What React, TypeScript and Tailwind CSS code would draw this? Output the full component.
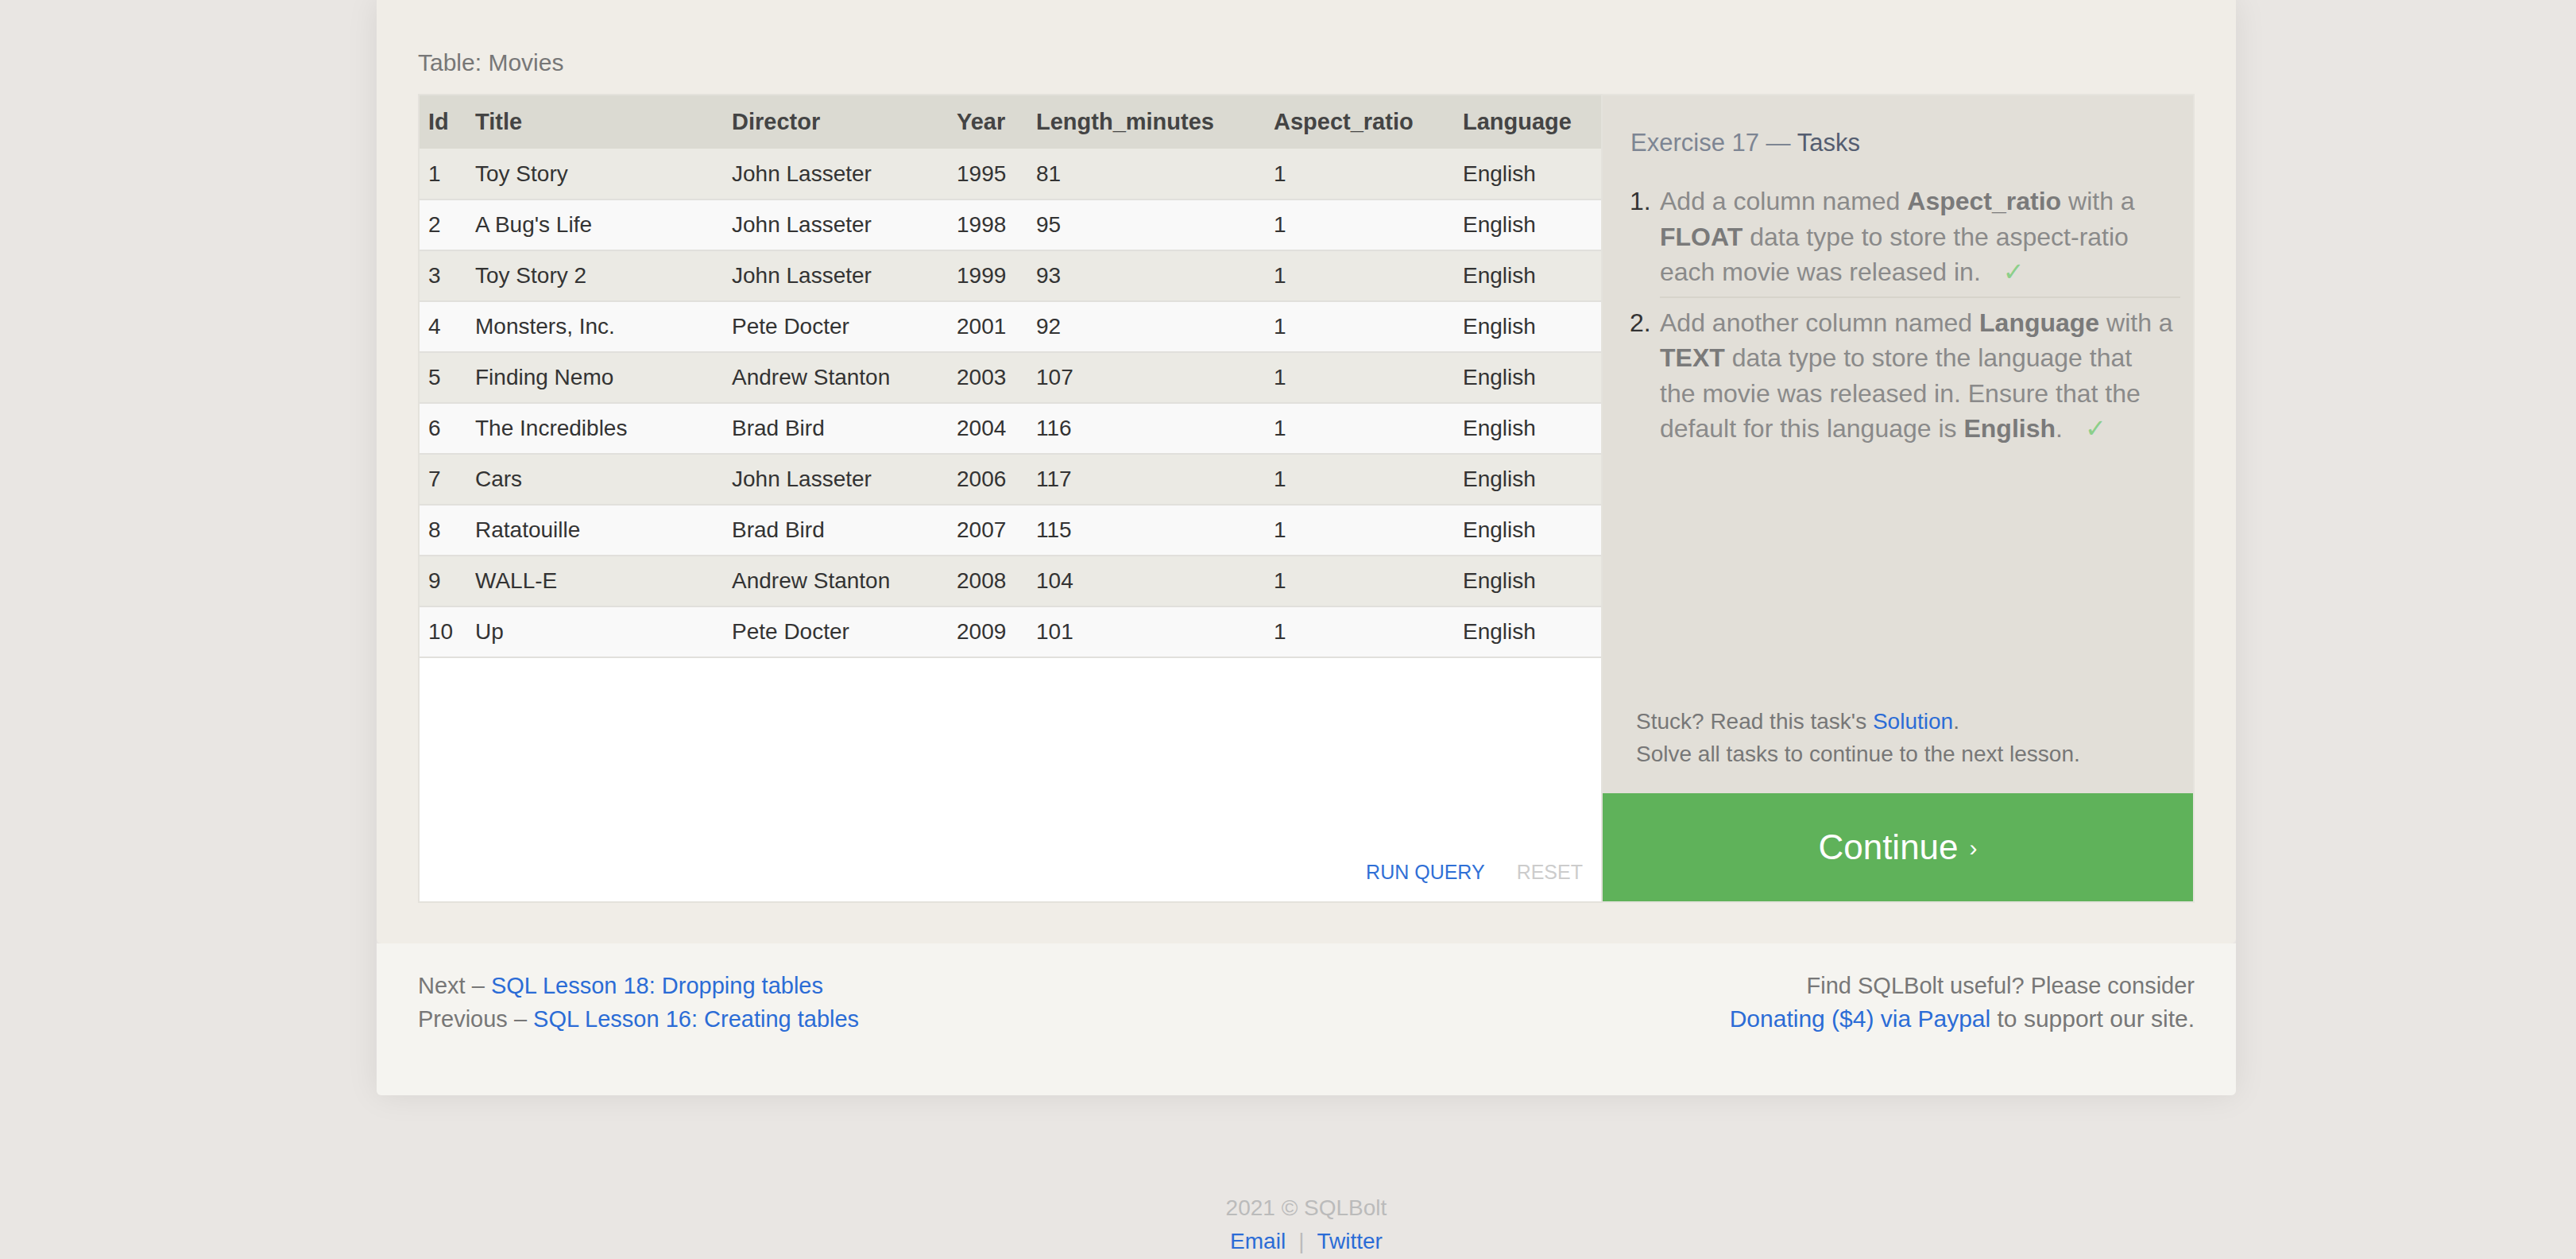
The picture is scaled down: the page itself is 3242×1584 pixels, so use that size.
import React from 'react';

const movies = [
  [1, 'Toy Story', 'John Lasseter', 1995, 81],
  [2, "A Bug's Life", 'John Lasseter', 1998, 95],
  [3, 'Toy Story 2', 'John Lasseter', 1999, 93],
  [4, 'Monsters, Inc.', 'Pete Docter', 2001, 92],
  [5, 'Finding Nemo', 'Andrew Stanton', 2003, 107],
  [6, 'The Incredibles', 'Brad Bird', 2004, 116],
  [7, 'Cars', 'John Lasseter', 2006, 117],
  [8, 'Ratatouille', 'Brad Bird', 2007, 115],
  [9, 'WALL-E', 'Andrew Stanton', 2008, 104],
  [10, 'Up', 'Pete Docter', 2009, 101],
];

const columns = ['Id', 'Title', 'Director', 'Year', 'Length_minutes', 'Aspect_ratio', 'Language'];
const widths = ['w-[59px]', 'w-[323px]', 'w-[283px]', 'w-[100px]', 'w-[299px]', 'w-[238px]', 'w-[185px]'];

const Check = () => (
  <span className="ml-[28px] text-[#8ccf8a] font-['DejaVu_Sans',sans-serif] text-[32px]">✓</span>
);

const MoviesTable = () => (
  <table className="w-[1487px] table-fixed border-collapse">
    <colgroup>
      {widths.map((w, i) => (
        <col key={i} className={w} />
      ))}
    </colgroup>
    <thead>
      <tr className="bg-[#dbdad2]">
        {columns.map((c) => (
          <th key={c} className="h-[67px] pl-[11px] text-left text-[29px] font-bold text-[#444]">
            {c}
          </th>
        ))}
      </tr>
    </thead>
    <tbody>
      {movies.map((m, i) => (
        <tr key={i} className={i % 2 === 0 ? 'bg-[#ebeae4]' : 'bg-[#f9f9f9]'}>
          {[...m, 1, 'English'].map((v, j) => (
            <td
              key={j}
              className="h-[64px] pl-[11px] border-b-2 border-[#e1e0dc] text-[28px] text-[#333] whitespace-nowrap"
            >
              {v}
            </td>
          ))}
        </tr>
      ))}
    </tbody>
  </table>
);

const TaskPanel = () => (
  <div className="flex-1 flex flex-col bg-[#e2dfd8] border-2 border-l-0 border-[#e6e4de]">
    <div className="pl-[35px] pt-[40px] text-[31px] leading-[40px] text-[#7d8593]">
      Exercise 17 — <span className="text-[#545d70]">Tasks</span>
    </div>

    <ol className="mt-[31px] pl-[34px] pr-[16px] text-[32px] leading-[44.5px] text-[#8a8a8a]">
      <li className="flex">
        <span className="w-[38px] shrink-0 text-[#333]">1.</span>
        <div className="flex-1 whitespace-nowrap pb-[8px] border-b-2 border-[#d7d4cb]">
          Add a column named <b className="text-[#7a7a7a]">Aspect_ratio</b> with a
          <br />
          <b className="text-[#7a7a7a]">FLOAT</b> data type to store the aspect-ratio
          <br />
          each movie was released in.
          <Check />
        </div>
      </li>
      <li className="flex pt-[9px]">
        <span className="w-[38px] shrink-0 text-[#333]">2.</span>
        <div className="whitespace-nowrap">
          Add another column named <b className="text-[#7a7a7a]">Language</b> with a
          <br />
          <b className="text-[#7a7a7a]">TEXT</b> data type to store the language that
          <br />
          the movie was released in. Ensure that the
          <br />
          default for this language is <b className="text-[#7a7a7a]">English</b>.
          <Check />
        </div>
      </li>
    </ol>

    <div className="mt-auto pl-[42px] pb-[29px] text-[28px] leading-[41px] text-[#777]">
      <div>
        Stuck? Read this task's <a className="text-[#2b6cd6]">Solution</a>.
      </div>
      <div>Solve all tasks to continue to the next lesson.</div>
    </div>

    <button className="h-[136px] w-full bg-[#5fb25a] text-white flex items-center justify-center">
      <span className="text-[44px]">Continue</span>
      <span className="ml-[14px] text-[30px]">›</span>
    </button>
  </div>
);

export default function App() {
  return (
    <div className="min-h-screen bg-[#e9e6e3] font-['Liberation_Sans',Arial,sans-serif] pb-[2px]">
      <div className="ml-[474px] w-[2340px] rounded-b-[6px] overflow-hidden shadow-[0_0_40px_rgba(0,0,0,0.08)]">
        <div className="bg-[#f0ede7] px-[52px] pt-[58px] pb-[51px] rounded-b-[6px]">
          <div className="text-[30px] leading-[42px] text-[#777] mb-[18px]">Table: Movies</div>
          <div className="flex h-[1018px]">
            <div className="w-[1491px] shrink-0 flex flex-col bg-white border-2 border-[#e4e2dc]">
              <MoviesTable />
              <div className="mt-auto flex justify-end items-center gap-[40px] pr-[23px] pb-[22px] text-[25px] leading-[30px]">
                <span className="text-[#2f6fd6]">RUN QUERY</span>
                <span className="text-[#cccccc]">RESET</span>
              </div>
            </div>
            <TaskPanel />
          </div>
        </div>

        <div className="bg-[#f5f4f0] px-[52px] pt-[32px] pb-[75px] flex justify-between text-[29px] leading-[42px] text-[#777]">
          <div>
            <div>
              Next – <a className="text-[#2b6cd6]">SQL Lesson 18: Dropping tables</a>
            </div>
            <div>
              Previous – <a className="text-[#2b6cd6]">SQL Lesson 16: Creating tables</a>
            </div>
          </div>
          <div className="text-right">
            <div>Find SQLBolt useful? Please consider</div>
            <div className="text-[30px]">
              <a className="text-[#2b6cd6]">Donating ($4) via Paypal</a> to support our site.
            </div>
          </div>
        </div>
      </div>

      <div className="ml-[474px] w-[2340px] mt-[121px] text-center text-[28px] leading-[42px]">
        <div className="text-[#bbbbbb]">2021 © SQLBolt</div>
        <div>
          <a className="text-[#2b6cd6]">Email</a>
          <span className="mx-[16px] text-[#bbbbbb]">|</span>
          <a className="text-[#2b6cd6]">Twitter</a>
        </div>
      </div>
    </div>
  );
}
